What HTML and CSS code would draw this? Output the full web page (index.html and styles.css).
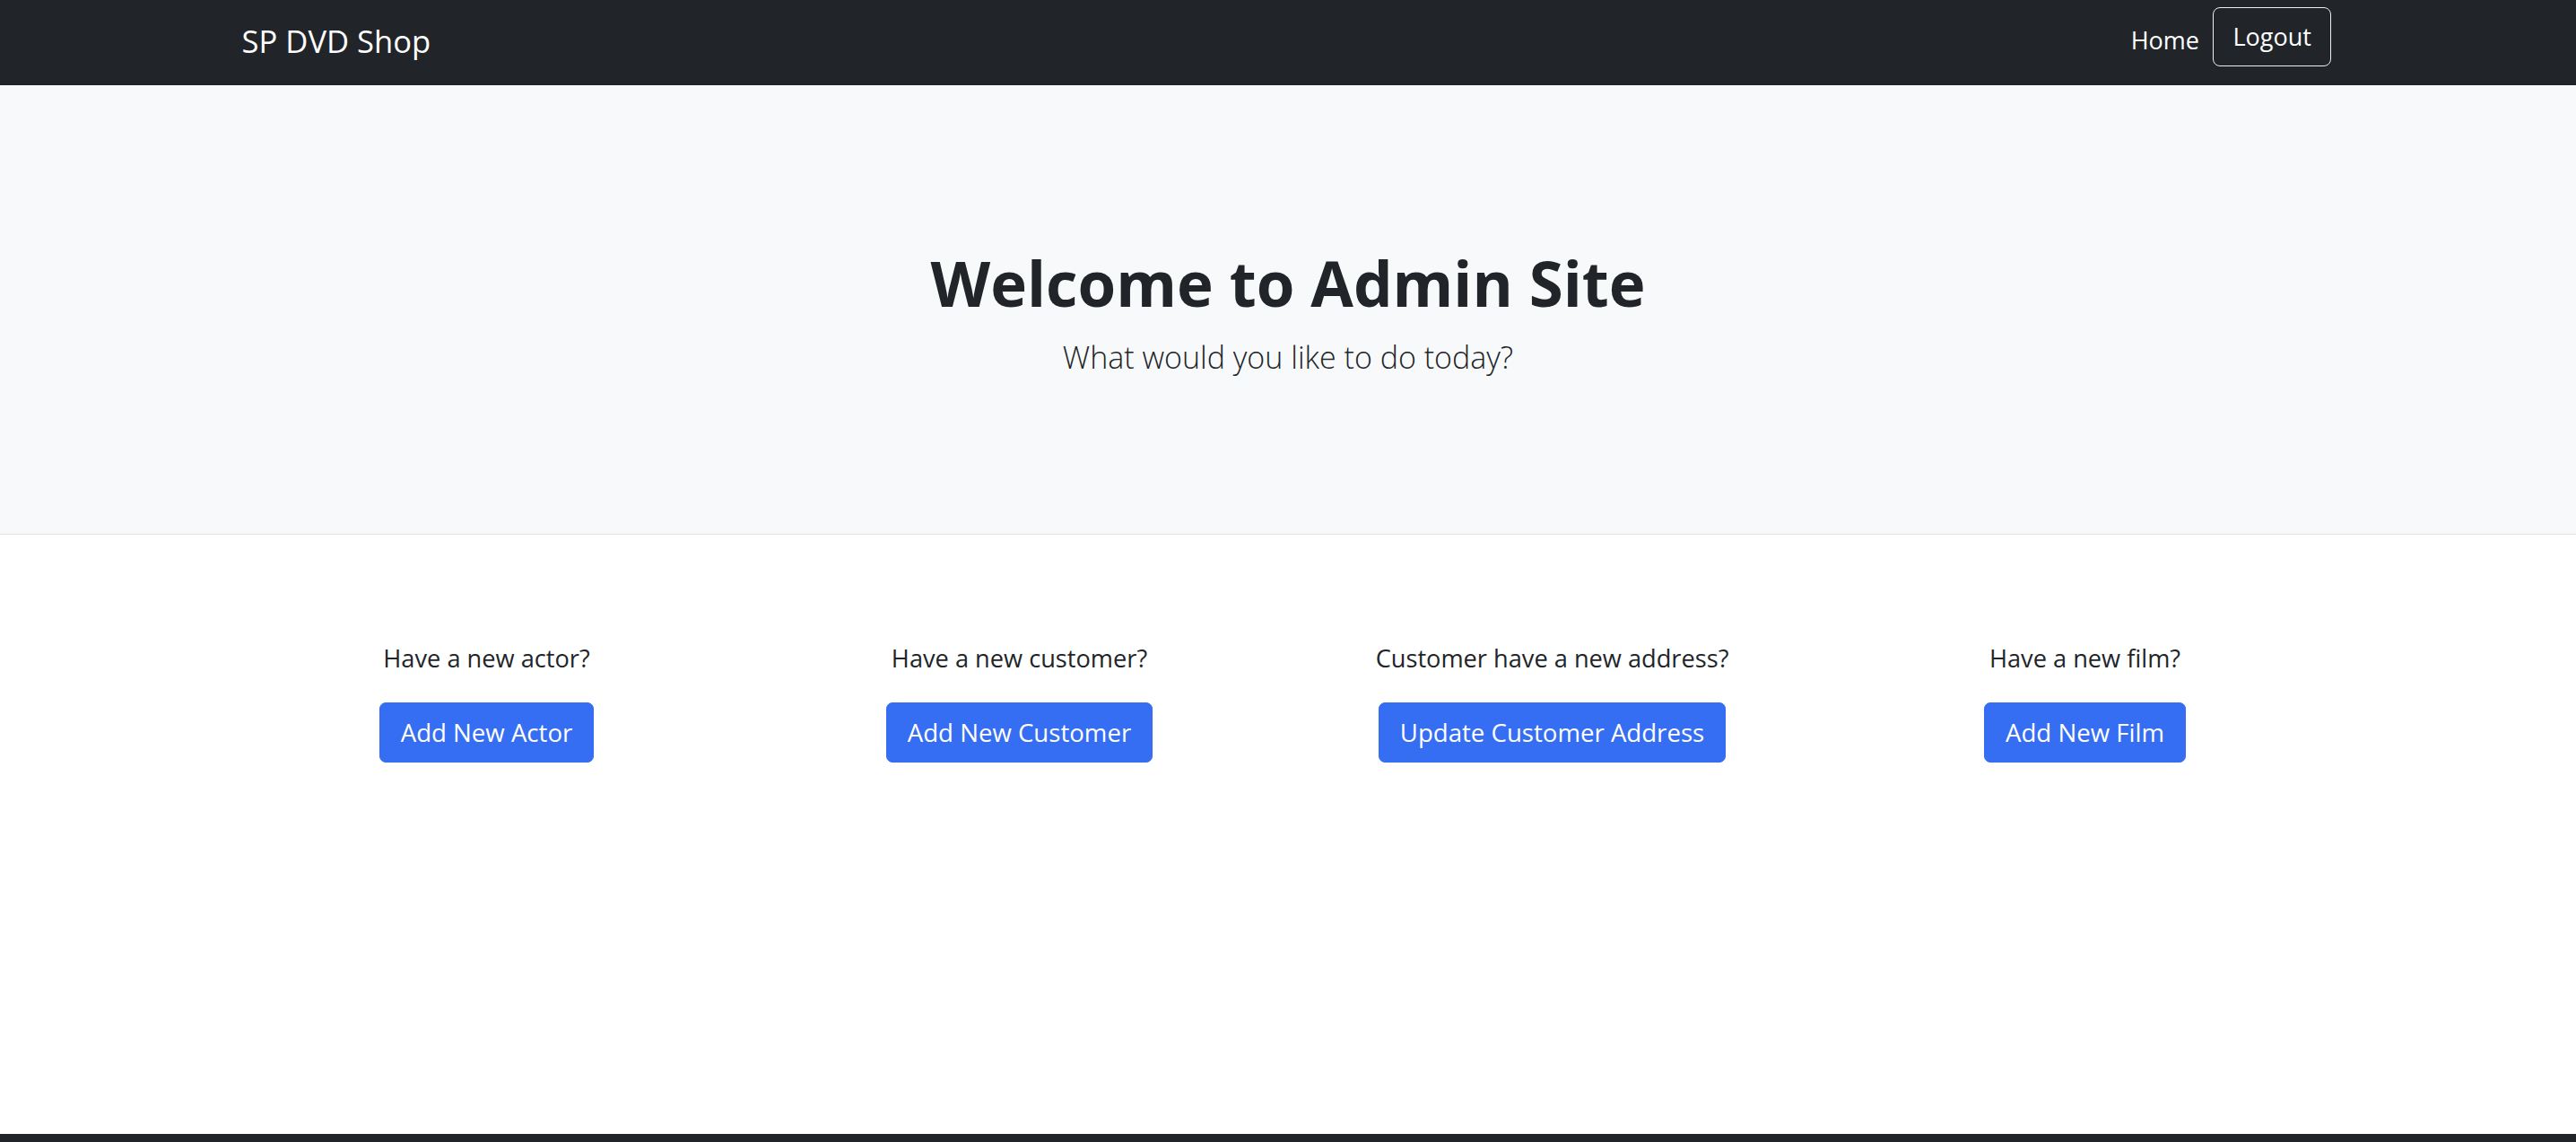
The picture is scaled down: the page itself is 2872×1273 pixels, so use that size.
FILE: index.html
```html
<!DOCTYPE html>
<html lang="en">
<head>
<meta charset="utf-8">
<title>SP DVD Shop - Admin</title>
<link rel="stylesheet" href="styles.css">
</head>
<body>
<nav class="navbar">
  <div class="container nav-inner">
    <a class="brand" href="#">SP DVD Shop</a>
    <ul class="nav-list">
      <li><a class="nav-link" href="#">Home</a></li>
      <li><button class="btn-logout" type="button">Logout</button></li>
    </ul>
  </div>
</nav>
<header class="hero">
  <h1 class="hero-title">Welcome to Admin Site</h1>
  <p class="hero-lead">What would you like to do today?</p>
</header>
<main class="actions">
  <div class="container action-row">
    <div class="action-col">
      <p class="action-q">Have a new actor?</p>
      <button class="btn-primary" type="button">Add New Actor</button>
    </div>
    <div class="action-col">
      <p class="action-q">Have a new customer?</p>
      <button class="btn-primary" type="button">Add New Customer</button>
    </div>
    <div class="action-col">
      <p class="action-q">Customer have a new address?</p>
      <button class="btn-primary" type="button">Update Customer Address</button>
    </div>
    <div class="action-col">
      <p class="action-q">Have a new film?</p>
      <button class="btn-primary" type="button">Add New Film</button>
    </div>
  </div>
</main>
<footer class="footer"></footer>
</body>
</html>
```
FILE: styles.css
```css
* { box-sizing: border-box; }
html, body { height: 100%; }
body {
  margin: 0;
  font-family: "Open Sans", "Noto Sans", sans-serif;
  color: #212529;
  background: #fff;
  display: flex;
  flex-direction: column;
  min-height: 100vh;
}
.container {
  width: 2376px;
  margin: 0 auto;
  padding: 0 21.6px;
}
.navbar {
  background: #212529;
  height: 95px;
  flex: 0 0 95px;
}
.nav-inner {
  display: flex;
  justify-content: space-between;
  align-items: flex-start;
  height: 95px;
}
.brand {
  margin-top: 19.6px;
  font-size: 34.6px;
  line-height: 52px;
  color: #fff;
  text-decoration: none;
  white-space: nowrap;
}
.nav-list {
  list-style: none;
  margin: 8px 3px 0 0;
  padding: 0;
  display: flex;
  align-items: flex-start;
  gap: 15px;
}
.nav-link {
  display: block;
  padding-top: 17.3px;
  font-size: 27px;
  line-height: 40.5px;
  color: #fff;
  text-decoration: none;
}
.btn-logout {
  display: block;
  font-family: inherit;
  font-size: 27px;
  line-height: 40.5px;
  color: #fff;
  background: transparent;
  border: 1px solid #eceef0;
  border-radius: 8px;
  padding: 12px 21.5px 11.5px;
}
.hero {
  background: #f8f9fa;
  border-bottom: 1px solid #dee2e6;
  padding: 178.8px 0 170.7px;
  text-align: center;
  flex: 0 0 auto;
}
.hero-title {
  margin: 0;
  font-size: 69px;
  font-weight: 700;
  line-height: 82.8px;
}
.hero-lead {
  margin: 16.7px 0 0;
  font-size: 34px;
  font-weight: 300;
  line-height: 51px;
}
.actions {
  flex: 1 0 auto;
  padding-top: 118px;
}
.action-row {
  display: grid;
  grid-template-columns: repeat(4, 1fr);
  padding: 0;
}
.action-col {
  text-align: center;
  padding: 0 21.6px;
  margin-left: -2.5px;
  margin-right: 2.5px;
}
.action-q {
  margin: 0 0 28.2px;
  font-size: 27.2px;
  line-height: 40.8px;
}
.btn-primary {
  font-family: inherit;
  font-size: 27.6px;
  line-height: 41.4px;
  color: #fff;
  background: #356ef3;
  border: 1px solid #356ef3;
  border-radius: 7px;
  padding: 12px 23px;
  cursor: pointer;
}
.footer {
  background: #212529;
  flex: 0 0 9px;
}
```
